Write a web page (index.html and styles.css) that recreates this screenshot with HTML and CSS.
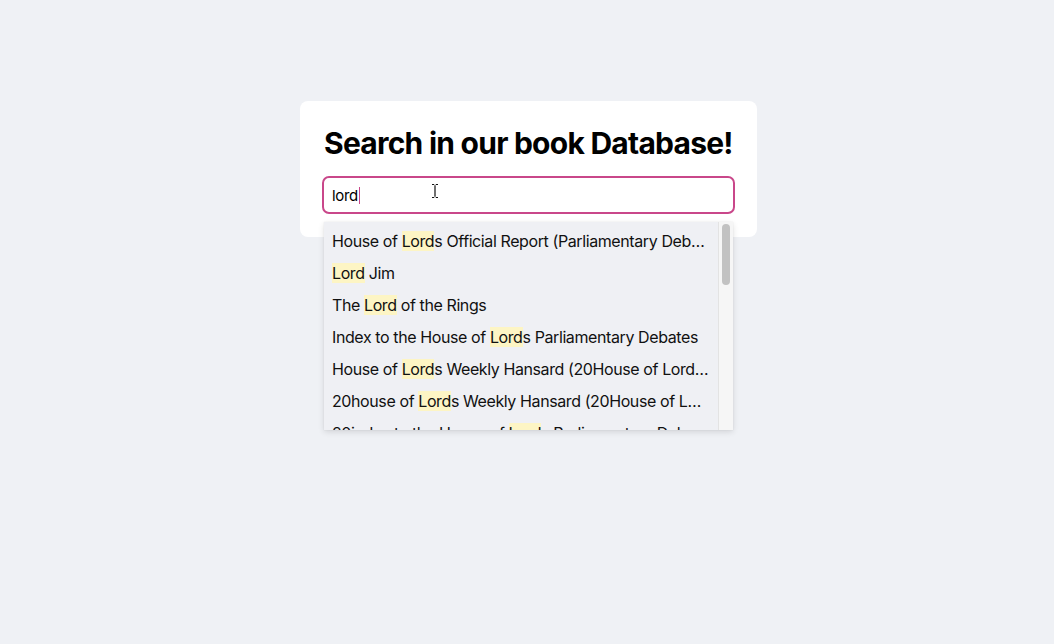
FILE: index.html
```html
<!DOCTYPE html>
<html lang="en">
<head>
<meta charset="utf-8">
<title>Book search</title>
<link rel="stylesheet" href="styles.css">
</head>
<body>
<main class="page">
  <section class="card">
    <h1 class="title">Search in our book Database!</h1>
    <div class="search">
      <div class="input"><span class="value">lord</span><span class="caret"></span></div>
      <svg class="ibeam" width="8" height="16" viewBox="0 0 8 16"><path d="M1 1.5h2.2M4.8 1.5H7M4 2.2v11.6M1 14.5h2.2M4.8 14.5H7" stroke="#111" stroke-width="1.2" fill="none"/></svg>
      <div class="dropdown">
        <ul class="list">
          <li class="item">House of <mark>Lord</mark>s Official Report (Parliamentary Debates)</li>
          <li class="item"><mark>Lord</mark> Jim</li>
          <li class="item">The <mark>Lord</mark> of the Rings</li>
          <li class="item">Index to the House of <mark>Lord</mark>s Parliamentary Debates</li>
          <li class="item">House of <mark>Lord</mark>s Weekly Hansard (20House of Lords Weekly Hansard)</li>
          <li class="item">20house of <mark>Lord</mark>s Weekly Hansard (20House of Lords)</li>
          <li class="item">20index to the House of <mark>Lord</mark>s Parliamentary Debates</li>
        </ul>
        <div class="scrollbar"><div class="thumb"></div></div>
      </div>
    </div>
  </section>
</main>
</body>
</html>
```
FILE: styles.css
```css
html, body {
  margin: 0;
  padding: 0;
}
body {
  background: #eff1f5;
  font-family: Inter, "Noto Sans", sans-serif;
  color: #111;
  width: 1054px;
  height: 644px;
  overflow: hidden;
}
.page {
  display: flex;
  justify-content: center;
  padding-top: 101px;
}
.card {
  background: #fff;
  border-radius: 8px;
  width: 457px;
  box-sizing: border-box;
  padding: 22px 22px 23px;
  margin-left: 3px;
}
.title {
  margin: 0 0 13px 2px;
  font-size: 30px;
  line-height: 40px;
  font-weight: 700;
  letter-spacing: -0.75px;
  white-space: nowrap;
  color: #000;
}
.search {
  position: relative;
}
.input {
  height: 38px;
  box-sizing: border-box;
  border: 2px solid #c9478a;
  border-radius: 7px;
  display: flex;
  align-items: center;
  padding-left: 8px;
  font-size: 15px;
  letter-spacing: -0.3px;
  color: #000;
}
.caret {
  display: inline-block;
  width: 1px;
  height: 17px;
  background: #c9478a;
  margin-left: 1px;
}
.ibeam {
  position: absolute;
  left: 109px;
  top: 7px;
}
.dropdown {
  position: absolute;
  left: 2px;
  top: 46px;
  width: 409px;
  height: 208px;
  background: #eff0f4;
  box-shadow: 0 2px 6px rgba(0,0,0,0.12), 0 0 1px rgba(0,0,0,0.1);
  display: flex;
  overflow: hidden;
}
.list {
  list-style: none;
  margin: 0;
  padding: 3px 0 0;
  flex: 1;
  min-width: 0;
}
.item {
  height: 32px;
  line-height: 32px;
  padding: 0 8px;
  font-size: 16px;
  letter-spacing: -0.4px;
  color: #111;
  white-space: nowrap;
  overflow: hidden;
  text-overflow: ellipsis;
}
mark {
  background: #fdf5c4;
  color: inherit;
}
.scrollbar {
  width: 15px;
  flex: none;
  background: #f6f6f6;
  border-left: 1px solid #e3e3e3;
  padding: 2px 0 0 3px;
  box-sizing: border-box;
}
.thumb {
  width: 8px;
  height: 61px;
  border-radius: 4px;
  background: #c2c2c2;
}
```
